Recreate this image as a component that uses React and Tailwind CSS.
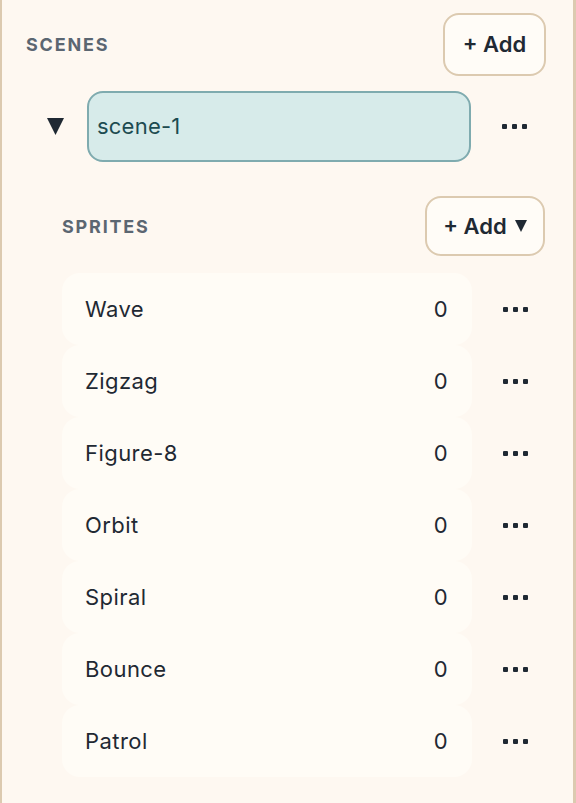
import React from "react";

const sprites = ["Wave", "Zigzag", "Figure-8", "Orbit", "Spiral", "Bounce", "Patrol"];

function Dots() {
    return (
        <button className="flex items-center gap-[5px] ml-[31px] h-[20px]">
            <span className="w-[5px] h-[5px] rounded-[1px] bg-[#1f2933]" />
            <span className="w-[5px] h-[5px] rounded-[1px] bg-[#1f2933]" />
            <span className="w-[5px] h-[5px] rounded-[1px] bg-[#1f2933]" />
        </button>
    );
}

function Triangle({ size }) {
    return (
        <svg width={size} height={size} viewBox="0 0 12 12">
            <polygon points="0,0 12,0 6,12" fill="#1f2933" />
        </svg>
    );
}

export default function App() {
    return (
        <div className="w-[576px] h-[803px] bg-[#fef8f1] border-l-2 border-r-[3px] border-[#dccab0] pl-6 pr-[27px] pt-[13px] font-['Inter',sans-serif] text-[#1f2933]">
            {/* scenes header */}
            <div className="flex items-center justify-between">
                <span className="text-[18px] font-bold tracking-[0.1em] text-[#5b6671]">SCENES</span>
                <button className="h-[63px] w-[103px] rounded-[16px] border-2 border-[#dccab0] bg-[#fffcf7] text-[22px] font-semibold">
                    + Add
                </button>
            </div>

            {/* scene row */}
            <div className="flex items-center mt-[15px]">
                <div className="w-[61px] pl-[21px] flex items-center">
                    <Triangle size={17} />
                </div>
                <div className="w-[384px] h-[71px] rounded-[16px] border-2 border-[#7fabaf] bg-[#d7ebea] flex items-center pl-[8px] text-[22px] tracking-[0.01em] text-[#1d4b51]">
                    scene-1
                </div>
                <Dots />
            </div>

            {/* sprites */}
            <div className="mt-[34px] pl-[36px]">
                <div className="flex items-center justify-between">
                    <span className="text-[18px] font-bold tracking-[0.1em] text-[#5b6671]">SPRITES</span>
                    <button className="h-[60px] w-[120px] mr-[1px] rounded-[16px] border-2 border-[#dccab0] bg-[#fffcf7] text-[22px] font-semibold flex items-center justify-center gap-[8px]">
                        + Add
                        <Triangle size={12} />
                    </button>
                </div>

                <div className="mt-[17px]">
                    {sprites.map((name) => (
                        <div key={name} className="flex items-center h-[72px]">
                            <div className="w-[410px] h-full rounded-[18px] bg-[#fffcf6] flex items-center justify-between pl-[23px] pr-[24px] text-[22px] tracking-[0.02em]">
                                <span>{name}</span>
                                <span>0</span>
                            </div>
                            <Dots />
                        </div>
                    ))}
                </div>
            </div>
        </div>
    );
}
